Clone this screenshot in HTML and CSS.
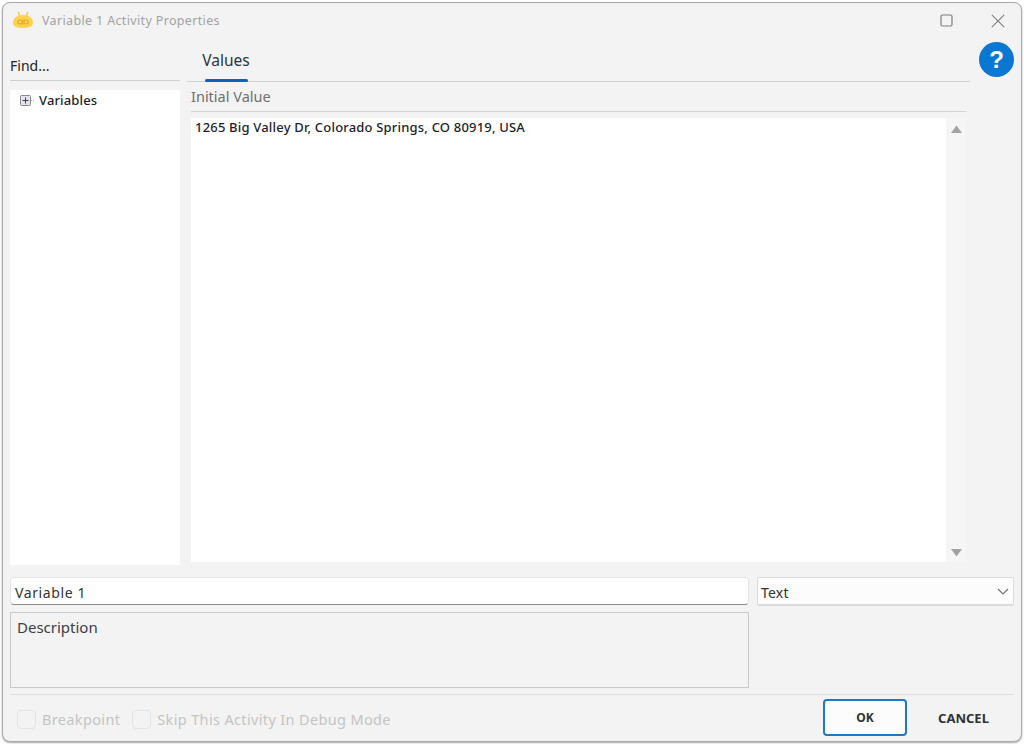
FILE: index.html
```html
<!DOCTYPE html>
<html lang="en">
<head>
<meta charset="utf-8">
<title>Variable 1 Activity Properties</title>
<link rel="stylesheet" href="styles.css">
</head>
<body>
<div class="window">
  <header class="titlebar">
    <svg class="app-icon" width="22" height="18" viewBox="0 0 22 18">
      <path d="M7.500 5 6.500 1.500M14.500 5l1-3.500" stroke="#f7cf45" stroke-width="1.600" stroke-linecap="round" fill="none"/>
      <path d="M1 12c0-5 4-8 10-8s10 3 10 8c0 3-4 5-10 5S1 15 1 12z" fill="#fad24f"/>
      <rect x="5" y="8.500" width="12" height="5" rx="2.500" fill="#efb327"/>
      <circle cx="8" cy="11" r="1" fill="#ffe48a"/><circle cx="14" cy="11" r="1" fill="#ffe48a"/>
    </svg>
    <span class="title">Variable 1 Activity Properties</span>
    <svg class="win-btn max" width="13" height="13" viewBox="0 0 13 13"><rect x="1" y="1" width="11" height="11" rx="1.500" fill="none" stroke="#7d7d7d" stroke-width="1.200"/></svg>
    <svg class="win-btn close" width="14" height="14" viewBox="0 0 14 14"><path d="M.8.8l12.400 12.400M13.200.8.8 13.200" stroke="#7d7d7d" stroke-width="1.100" fill="none"/></svg>
  </header>

  <main class="main">
    <aside class="side">
      <div class="find">Find...</div>
      <div class="tree">
        <div class="tree-row">
          <svg width="14" height="11" viewBox="0 0 14 11"><rect x=".5" y=".5" width="10" height="10" rx="1" fill="#e4e4e8" stroke="#8a8a8a"/><path d="M2.500 5.500h6M5.500 2.500v6" stroke="#3a3a80" stroke-width="1"/><path d="M11 5.500h3" stroke="#aaa" stroke-dasharray="1 1"/></svg>
          <span>Variables</span>
        </div>
      </div>
    </aside>
    <section class="content">
      <nav class="tabs"><div class="tab">Values</div></nav>
      <div class="panel">
        <div class="section-label">Initial Value</div>
        <div class="editor">
          <div class="editor-text">1265 Big Valley Dr, Colorado Springs, CO 80919, USA</div>
          <div class="scrollbar">
            <svg width="11" height="8" viewBox="0 0 11 8"><path d="M5.500.5 11 8H0z" fill="#a3a3a3"/></svg>
            <svg width="11" height="8" viewBox="0 0 11 8"><path d="M0 0h11L5.500 7.500z" fill="#a3a3a3"/></svg>
          </div>
        </div>
      </div>
    </section>
    <div class="help-col">
      <svg width="35" height="35" viewBox="0 0 35 35"><circle cx="17.500" cy="17.500" r="17.500" fill="#0a78d2"/><text x="17.500" y="25.500" text-anchor="middle" class="help-mark">?</text></svg>
    </div>
  </main>

  <div class="form">
    <div class="form-left">
      <div class="name-input">Variable 1</div>
      <div class="description">Description</div>
    </div>
    <div class="type-select">
      <span class="type-value">Text</span>
      <svg width="12" height="7" viewBox="0 0 12 7"><path d="M1 1l5 5 5-5" fill="none" stroke="#707070" stroke-width="1.100"/></svg>
    </div>
  </div>

  <footer class="footer">
    <label class="check"><span class="box"></span>Breakpoint</label>
    <label class="check"><span class="box"></span>Skip This Activity In Debug Mode</label>
    <div class="buttons">
      <div class="btn ok">OK</div>
      <div class="btn cancel">CANCEL</div>
    </div>
  </footer>
</div>
</body>
</html>
```
FILE: styles.css
```css
* { box-sizing: border-box; }
html, body { margin: 0; height: 100%; background: #fff; }
body { padding: 2px; font-family: "Noto Sans", "Open Sans", sans-serif; color: #222; overflow: hidden; }

.window {
  width: 1020px; height: 740px;
  background: #f3f3f3;
  border: 1px solid #a9a9a9;
  border-radius: 8px;
  box-shadow: 0 1px 2px rgba(0,0,0,.35);
  display: flex; flex-direction: column;
  padding: 0 7px;
}

.titlebar { height: 35px; display: flex; align-items: center; flex: none; margin-bottom: 1px; }
.app-icon { margin-left: 2px; margin-top: -2px; }
.title { margin-left: 8px; font-size: 12.500px; color: #a2a2a2; letter-spacing: .35px; }
.win-btn.max { margin-left: auto; }
.win-btn.close { margin-left: 38px; margin-right: 9px; }

.main { display: flex; height: 526px; flex: none; }
.side { width: 170px; display: flex; flex-direction: column; flex: none; }
.find { height: 42px; padding-top: 15px; line-height: 24px; font-size: 14px; color: #222; border-bottom: 1px solid #d0d0d0; flex: none; }
.tree { margin-top: 9px; flex: 1; background: #fff; padding: 1px 0 0 10px; }
.tree-row { display: flex; align-items: center; gap: 5px; font-size: 13px; height: 18px; color: #1d1d2b; letter-spacing: .15px; font-weight: 500; }

.content { width: 783px; margin-left: 7px; display: flex; flex-direction: column; flex: none; }
.tabs { height: 43px; border-bottom: 1px solid #d0d0d0; flex: none; padding-left: 15px; }
.tab { width: 48px; height: 42px; padding-top: 10px; line-height: 22px; font-size: 15.500px; color: #2a3440; text-align: center; position: relative; }
.tab::after { content: ""; position: absolute; left: 3px; right: 2px; bottom: -1px; height: 3px; border-radius: 2px; background: #0a63b8; }
.panel { margin-left: 4px; width: 775px; flex: 1; display: flex; flex-direction: column; }
.section-label { height: 30px; line-height: 29px; font-size: 14.500px; color: #6f6f6f; border-bottom: 1px solid #d4d4d4; flex: none; }
.editor { margin-top: 6px; height: 444px; display: flex; flex: none; }
.editor-text { flex: 1; background: #fff; padding: 0 0 0 4px; font-size: 13px; letter-spacing: .19px; line-height: 18px; color: #1d1d2b; font-weight: 500; }
.scrollbar { width: 20px; background: #f6f6f6; display: flex; flex-direction: column; justify-content: space-between; align-items: center; padding: 7px 0 5px; }

.help-col { flex: 1; padding: 3px 0 0 9px; }
.help-mark { font-family: "Liberation Sans", sans-serif; font-size: 24px; font-weight: 700; fill: #fff; }

.form { display: flex; flex: none; margin-top: 12px; gap: 8px; }
.form-left { width: 739px; display: flex; flex-direction: column; gap: 7px; }
.name-input { height: 28px; background: #fff; border-radius: 4px; border: 1px solid #e4e4e4; border-bottom: 1px solid #8a8a8a; font-size: 14px; letter-spacing: .6px; line-height: 29px; padding-left: 4px; color: #333; }
.description { height: 76px; border: 1px solid #c9c9c9; padding: 3px 6px; font-size: 15px; line-height: 22px; color: #3c4048; }
.type-select { width: 257px; height: 29px; background: #fcfcfc; border: 1px solid #dcdcdc; border-bottom-width: 2px; border-radius: 2px; display: flex; align-items: center; justify-content: space-between; font-size: 14px; letter-spacing: .2px; padding: 0 4px 0 3px; color: #333; }
.type-value { padding-top: 2px; }

.footer { margin-top: 6px; border-top: 1px solid #dedede; display: flex; flex: 1; align-items: flex-start; }
.check { display: flex; align-items: center; gap: 6px; font-size: 14.500px; letter-spacing: .35px; color: #c4c4c4; height: 24px; margin-top: 12px; margin-left: 7px; white-space: nowrap; }
.check + .check { margin-left: 12px; }
.box { width: 19px; height: 19px; border: 1px solid #e4e4e4; border-radius: 4px; flex: none; }
.buttons { margin-left: auto; display: flex; margin-top: 4px; }
.btn { height: 37px; font-size: 12px; font-weight: 700; display: flex; align-items: center; justify-content: center; color: #2f3236; }
.ok { width: 84px; background: #fcfcfc; border: 2px solid #1e78c8; border-radius: 4px; }
.cancel { width: 107px; padding-left: 6px; font-size: 13px; }
```
